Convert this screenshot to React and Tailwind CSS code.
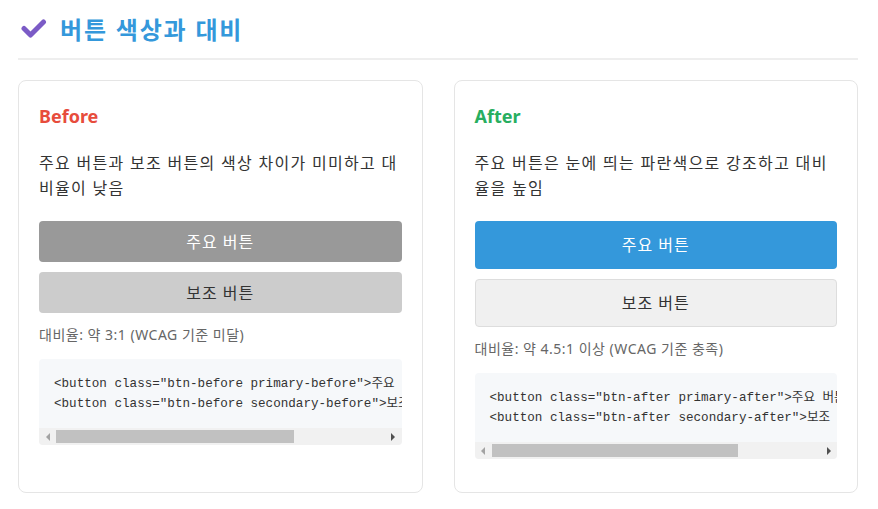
import React from 'react';

const ko = "font-['Noto_Sans','Noto_Sans_CJK_KR',sans-serif]";
const mono = "font-['Liberation_Mono','Noto_Sans_CJK_KR',monospace]";

const Scrollbar = ({ thumb }) => (
  <div className="flex h-[17px] items-center bg-[#f1f1f1]">
    <div className="flex h-[17px] w-[17px] items-center justify-center">
      <div className="h-0 w-0 border-y-[4px] border-r-[4px] border-y-transparent border-r-[#a3a3a3]" />
    </div>
    <div className="flex h-[17px] flex-1 items-center">
      <div className="h-[13px] bg-[#c1c1c1]" style={{ width: thumb }} />
    </div>
    <div className="flex h-[17px] w-[17px] items-center justify-center">
      <div className="h-0 w-0 border-y-[4px] border-l-[4px] border-y-transparent border-l-[#505050]" />
    </div>
  </div>
);

const CodeBlock = ({ lines, thumb }) => (
  <div className="mb-[13px] overflow-hidden rounded-[4px] bg-[#f6f8fa]">
    <div className={`overflow-hidden whitespace-pre pb-[14px] pl-[15px] pt-[15px] text-[12.6px] leading-[20px] text-[#333] ${mono}`}>
      {lines.map((l) => <div key={l}>{l}</div>)}
    </div>
    <Scrollbar thumb={thumb} />
  </div>
);

const Card = ({ title, titleColor, desc, children, ratio, code, thumb }) => (
  <div className="rounded-lg border border-[#e5e5e5] bg-white p-[20px]">
    <h3 className={`h-[30px] text-[18px] font-bold leading-[30px] ${titleColor}`}>{title}</h3>
    <p className="mt-[20px] text-[16px] leading-[25px] tracking-[1.3px] text-[#333]">{desc}</p>
    <div className="mt-[20px] flex flex-col gap-[10px]">{children}</div>
    <p className="mt-[12px] text-[14px] leading-[20px] tracking-[0.5px] text-[#666]">{ratio}</p>
    <div className="mt-[14px]">
      <CodeBlock lines={code} thumb={thumb} />
    </div>
  </div>
);

export default function App() {
  return (
    <div className={`min-h-[509px] bg-white pl-[18px] pr-[20px] pt-[12px] ${ko}`}>
      <h1 className="box-content flex h-[36px] items-center border-b-2 border-[#eee] pb-[10px] text-[24px] font-bold leading-[36px] tracking-[1.8px] text-[#3498db]">
        <svg width="28" height="24" viewBox="0 0 28 24" className="ml-[3px] mr-[11px]">
          <polyline points="3,10.5 9.5,17 22.5,4" fill="none" stroke="#7b5bc6" strokeWidth="5" strokeLinecap="round" strokeLinejoin="round" />
        </svg>
        버튼 색상과 대비
      </h1>

      <div className="mt-[20px] grid grid-cols-2 gap-[31px]">
        <Card
          title="Before"
          titleColor="text-[#e74c3c]"
          desc="주요 버튼과 보조 버튼의 색상 차이가 미미하고 대비율이 낮음"
          ratio="대비율: 약 3:1 (WCAG 기준 미달)"
          code={['<button class="btn-before primary-before">주요 버튼</button>', '<button class="btn-before secondary-before">보조 버튼</button>']}
          thumb={238}
        >
          <button className="h-[41px] rounded-[4px] bg-[#999] text-[16px] tracking-[1px] text-white">주요 버튼</button>
          <button className="h-[41px] rounded-[4px] bg-[#ccc] text-[16px] tracking-[1px] text-[#333]">보조 버튼</button>
        </Card>
        <Card
          title="After"
          titleColor="text-[#27ae60]"
          desc="주요 버튼은 눈에 띄는 파란색으로 강조하고 대비율을 높임"
          ratio="대비율: 약 4.5:1 이상 (WCAG 기준 충족)"
          code={['<button class="btn-after primary-after">주요 버튼</button>', '<button class="btn-after secondary-after">보조 버튼</button>']}
          thumb={246}
        >
          <button className="h-[48px] rounded-[4px] bg-[#3498db] text-[16px] tracking-[1px] text-white">주요 버튼</button>
          <button className="h-[48px] rounded-[4px] border border-[#ddd] bg-[#f0f0f0] text-[16px] tracking-[1px] text-[#333]">보조 버튼</button>
        </Card>
      </div>
    </div>
  );
}
